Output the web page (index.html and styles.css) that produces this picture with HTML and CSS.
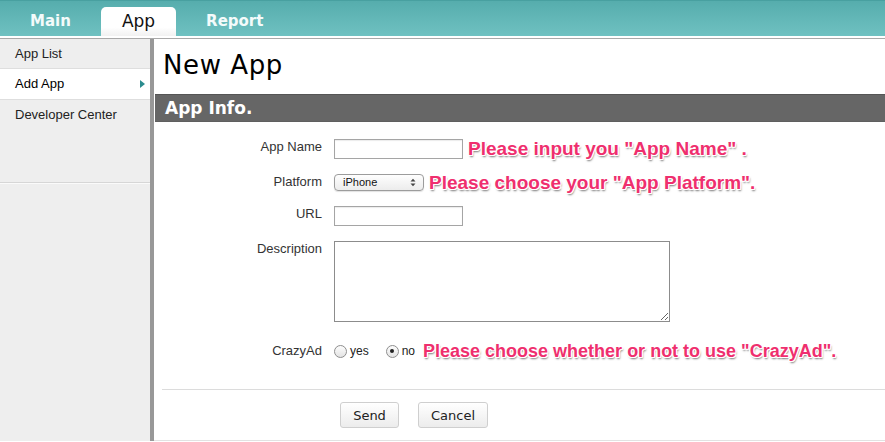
FILE: index.html
```html
<!DOCTYPE html>
<html>
<head>
<meta charset="utf-8">
<link rel="stylesheet" href="styles.css">
</head>
<body>
<header class="topbar">
  <nav class="tabs">
    <span class="tab">Main</span>
    <span class="tab active">App</span>
    <span class="tab">Report</span>
  </nav>
</header>
<div class="layout">
  <aside class="sidebar">
    <ul class="menu">
      <li class="item">App List</li>
      <li class="item current">Add App<span class="arrow"></span></li>
      <li class="item last">Developer Center</li>
    </ul>
  </aside>
  <main class="main">
    <h1 class="title">New App</h1>
    <h2 class="bar">App Info.</h2>
    <form class="form">
      <div class="row r-name">
        <label class="label">App Name</label>
        <div class="ctrl">
          <input class="text" type="text">
          <span class="hint">Please input you "App Name" .</span>
        </div>
      </div>
      <div class="row r-platform">
        <label class="label">Platform</label>
        <div class="ctrl">
          <div class="select">
            <span class="select-val">iPhone</span>
            <svg class="select-arrows" width="6" height="9" viewBox="0 0 6 9"><path d="M0.5 3.5 L3 0.8 L5.5 3.5 Z M0.5 5.5 L3 8.2 L5.5 5.5 Z" fill="#444"/></svg>
          </div>
          <span class="hint">Please choose your "App Platform".</span>
        </div>
      </div>
      <div class="row r-url">
        <label class="label">URL</label>
        <div class="ctrl">
          <input class="text" type="text">
        </div>
      </div>
      <div class="row r-desc">
        <label class="label">Description</label>
        <div class="ctrl">
          <textarea class="area"></textarea>
        </div>
      </div>
      <div class="row r-crazy">
        <label class="label">CrazyAd</label>
        <div class="ctrl">
          <span class="radio"></span><span class="rlabel yes">yes</span>
          <span class="radio checked"></span><span class="rlabel no">no</span>
          <span class="hint hint-c">Please choose whether or not to use "CrazyAd".</span>
        </div>
      </div>
      <div class="sep"></div>
      <div class="buttons">
        <button type="button" class="btn send">Send</button>
        <button type="button" class="btn cancel">Cancel</button>
      </div>
    </form>
  </main>
</div>
</body>
</html>
```
FILE: styles.css
```css
* { box-sizing: border-box; }
html, body {
  margin: 0;
  padding: 0;
  width: 885px;
  height: 442px;
  overflow: hidden;
  background: #fff;
  font-family: "Liberation Sans", Arial, sans-serif;
}
.topbar {
  height: 36px;
  background: linear-gradient(#56adad, #6fc1c1);
  border-top: 1px solid #48a0a0;
}
.tabs {
  display: flex;
  height: 35px;
  align-items: flex-end;
}
.tab {
  display: block;
  height: 29px;
  line-height: 28px;
  padding: 0 30px;
  font-family: "DejaVu Sans", sans-serif;
  font-weight: bold;
  font-size: 15px;
  color: #f4fbfb;
}
.tab.active {
  padding: 0 21px;
  background: linear-gradient(#ffffff 70%, #f1f1f1);
  border-radius: 5px 5px 0 0;
  color: #111;
  font-weight: normal;
  font-size: 17px;
  line-height: 29px;
}
.layout {
  display: flex;
  margin-top: 2px;
  border-top: 1px solid #a9a9a9;
  height: 403px;
}
.sidebar {
  width: 154px;
  flex: none;
  background: #eeeeee;
  border-right: 4px solid #989898;
}
.menu {
  list-style: none;
  margin: 0;
  padding: 0;
  height: 144px;
  border-bottom: 1px solid #d6d6d6;
  box-shadow: 0 1px 0 #fafafa;
}
.item {
  position: relative;
  height: 31px;
  line-height: 29px;
  padding-left: 15px;
  font-size: 13px;
  color: #222;
  border-bottom: 1px solid #dedede;
}
.item:first-child { height: 30px; }
.item.current {
  background: #fff;
  color: #000;
}
.item.last { border-bottom: none; }
.arrow {
  position: absolute;
  left: 140px;
  top: 11px;
  width: 0;
  height: 0;
  border-left: 5px solid #2b8c8e;
  border-top: 4px solid transparent;
  border-bottom: 4px solid transparent;
}
.main {
  flex: 1;
  padding-left: 1px;
  border-bottom: 1px solid #e2e2e2;
}
.title {
  margin: 0;
  height: 55px;
  line-height: 52px;
  padding-left: 8px;
  font-family: "DejaVu Sans", sans-serif;
  font-weight: normal;
  font-size: 26px;
  letter-spacing: 0.6px;
  color: #000;
}
.bar {
  margin: 0;
  height: 28px;
  line-height: 27px;
  background: #666;
  border-top: 1px solid #555;
  border-bottom: 1px solid #5f5f5f;
  padding-left: 10px;
  font-family: "DejaVu Sans", sans-serif;
  font-weight: bold;
  font-size: 17px;
  color: #fff;
}
.form {
  margin: 0;
  padding-top: 17px;
}
.row {
  display: flex;
  align-items: flex-start;
  margin-bottom: 15px;
}
.row.r-desc { margin-bottom: 21px; }
.label {
  width: 167px;
  flex: none;
  text-align: right;
  font-size: 13px;
  line-height: 16px;
  color: #333;
  margin-right: 12px;
}
.ctrl {
  display: flex;
  align-items: center;
}
.r-name .ctrl, .r-url .ctrl { height: 20px; }
.r-platform .ctrl { height: 17px; }
.text {
  width: 129px;
  height: 20px;
  margin: 0;
  border: 1px solid #a5a5a5;
  box-shadow: inset 0 1px 1px rgba(0,0,0,0.08);
  padding: 0;
  background: #fff;
}
.select {
  position: relative;
  width: 90px;
  height: 17px;
  border: 1px solid #9c9c9c;
  border-radius: 4px;
  background: linear-gradient(#fefefe, #ececec);
  box-shadow: 0 1px 1px rgba(0,0,0,0.12);
}
.select-val {
  display: block;
  padding-left: 8px;
  font-size: 11px;
  line-height: 15px;
  color: #111;
}
.select-arrows {
  position: absolute;
  right: 7px;
  top: 3px;
}
.area {
  display: block;
  width: 336px;
  height: 81px;
  margin: 0;
  border: 1px solid #8c8c8c;
  padding: 0;
  resize: both;
  background: #fff;
}
.hint {
  margin-left: 5px;
  font-family: "Liberation Sans", Arial, sans-serif;
  font-weight: bold;
  font-size: 19px;
  line-height: 20px;
  color: #ef2f6e;
  white-space: nowrap;
  text-shadow:
    -1px -1px 0 #fff, 1px -1px 0 #fff, -1px 1px 0 #fff, 1px 1px 0 #fff,
    0 -1px 0 #fff, 0 1px 0 #fff, -1px 0 0 #fff, 1px 0 0 #fff,
    1px 2px 2px rgba(0,0,0,0.55);
}
.hint-c {
  margin-left: 8px;
  font-size: 18px;
}
.r-crazy .ctrl { height: 16px; }
.radio {
  width: 13px;
  height: 13px;
  border-radius: 50%;
  border: 1px solid #8e8e8e;
  background: linear-gradient(#fdfdfd, #e3e3e3);
  display: flex;
  align-items: center;
  justify-content: center;
  flex: none;
}
.radio.checked::after {
  content: "";
  width: 4px;
  height: 4px;
  border-radius: 50%;
  background: #222;
}
.rlabel {
  margin-left: 3px;
  font-size: 12px;
  color: #222;
}
.rlabel.yes { margin-right: 17px; }
.sep {
  margin: 30px 0 0 7px;
  border-top: 1px solid #dcdcdc;
}
.buttons {
  display: flex;
  gap: 19px;
  padding-left: 185px;
  margin-top: 12px;
}
.btn {
  height: 26px;
  margin: 0;
  border: 1px solid #cfcfcf;
  border-radius: 3px;
  background: linear-gradient(#ffffff, #ececec);
  font-family: "DejaVu Sans", sans-serif;
  font-size: 13px;
  color: #222;
  padding: 0;
}
.send { width: 59px; }
.cancel { width: 70px; }
```
